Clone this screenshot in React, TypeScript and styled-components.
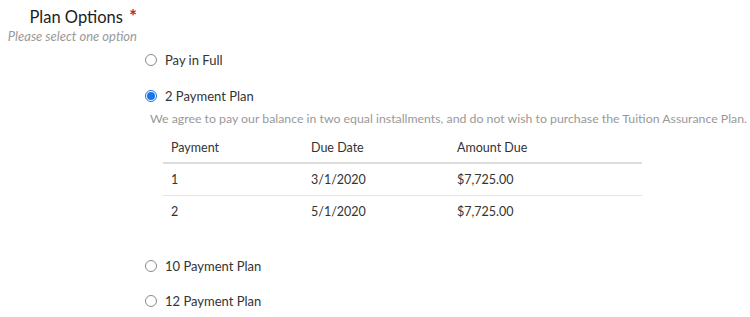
import React from "react";
import styled, { createGlobalStyle } from "styled-components";

const Global = createGlobalStyle`
  html, body { margin: 0; padding: 0; background: #fff; }
  body { font-family: "Lato", "Noto Sans", sans-serif; color: #222; }
`;

const Page = styled.div`
  display: flex;
  flex-direction: column;
  padding: 4px 0 0 0;
`;

const LabelCol = styled.div`
  width: 137px;
  display: flex;
  flex-direction: column;
  align-items: flex-end;
`;

const Title = styled.div`
  font-size: 16.5px;
  line-height: 24px;
  color: #1d1d1d;
  display: flex;
  align-items: baseline;
`;

const Star = styled.span`
  color: #c0282d;
  margin-left: 6px;
  font-size: 19px;
  font-weight: 700;
`;

const Hint = styled.div`
  font-size: 13px;
  line-height: 14px;
  font-style: italic;
  color: #9a9a9a;
`;

const Options = styled.div`
  display: flex;
  flex-direction: column;
  padding-left: 145px;
  margin-top: 7px;
`;

const OptionRow = styled.label<{ $gap: number }>`
  display: flex;
  align-items: center;
  gap: 8px;
  height: 20px;
  margin-top: ${(p) => p.$gap}px;
  font-size: 13px;
  color: #333;
`;

const Radio = styled.span<{ $on?: boolean }>`
  width: 12px;
  height: 12px;
  border-radius: 50%;
  box-sizing: border-box;
  border: 1px solid ${(p) => (p.$on ? "#1a73e8" : "#8a8a8a")};
  display: flex;
  align-items: center;
  justify-content: center;
  &::after {
    content: "";
    display: ${(p) => (p.$on ? "block" : "none")};
    width: 8px;
    height: 8px;
    border-radius: 50%;
    background: #1a73e8;
  }
`;

const Desc = styled.div`
  margin-left: 5px;
  margin-top: 5px;
  font-size: 12.3px;
  line-height: 16px;
  color: #999;
  white-space: nowrap;
`;

const Table = styled.table`
  margin-left: 18px;
  margin-top: 5px;
  width: 479px;
  table-layout: fixed;
  border-collapse: collapse;
  font-size: 12.5px;
  color: #333;
`;

const Th = styled.th`
  text-align: left;
  font-weight: 400;
  padding: 0 8px;
  height: 30px;
  border-bottom: 2px solid #ddd;
`;

const Td = styled.td<{ $last?: boolean }>`
  padding: 0 8px;
  height: 31px;
  border-bottom: ${(p) => (p.$last ? "none" : "1px solid #e6e6e6")};
`;

const rows = [
  { n: "1", d: "3/1/2020", a: "$7,725.00" },
  { n: "2", d: "5/1/2020", a: "$7,725.00" },
];

export default function App() {
  return (
    <>
      <Global />
      <Page>
        <LabelCol>
          <Title>
            Plan Options<Star>*</Star>
          </Title>
          <Hint>Please select one option</Hint>
        </LabelCol>
        <Options>
          <OptionRow $gap={0}>
            <Radio />
            Pay in Full
          </OptionRow>
          <OptionRow $gap={16}>
            <Radio $on />
            2 Payment Plan
          </OptionRow>
          <Desc>
            We agree to pay our balance in two equal installments, and do not
            wish to purchase the Tuition Assurance Plan.
          </Desc>
          <Table>
            <colgroup>
              <col style={{ width: 140 }} />
              <col style={{ width: 146 }} />
              <col />
            </colgroup>
            <thead>
              <tr>
                <Th>Payment</Th>
                <Th>Due Date</Th>
                <Th>Amount Due</Th>
              </tr>
            </thead>
            <tbody>
              {rows.map((r, i) => (
                <tr key={r.n}>
                  <Td $last={i === rows.length - 1}>{r.n}</Td>
                  <Td $last={i === rows.length - 1}>{r.d}</Td>
                  <Td $last={i === rows.length - 1}>{r.a}</Td>
                </tr>
              ))}
            </tbody>
          </Table>
          <OptionRow $gap={29}>
            <Radio />
            10 Payment Plan
          </OptionRow>
          <OptionRow $gap={15}>
            <Radio />
            12 Payment Plan
          </OptionRow>
        </Options>
      </Page>
    </>
  );
}
